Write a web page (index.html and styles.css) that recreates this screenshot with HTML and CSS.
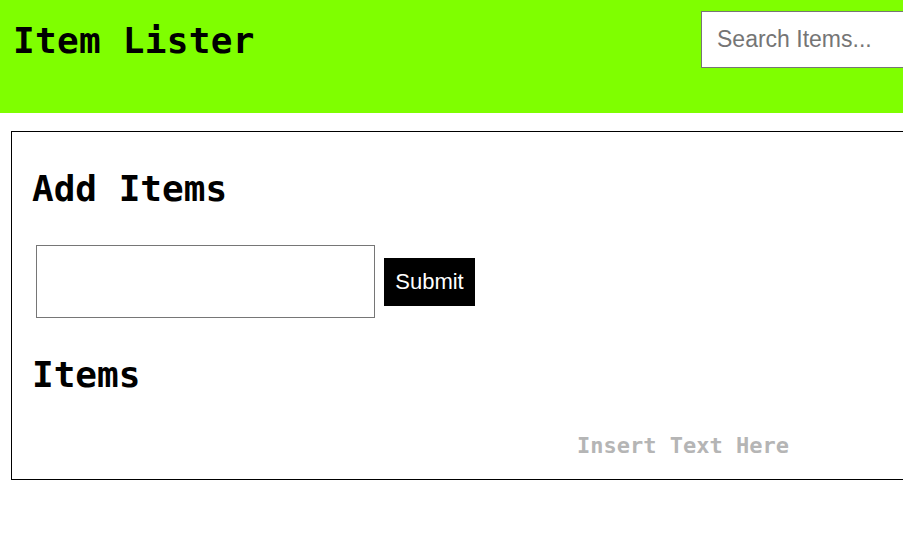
FILE: index.html
```html
<!DOCTYPE html>
<html>
<head>
<meta charset="utf-8">
<link rel="stylesheet" href="styles.css">
</head>
<body>
<div class="page">
<header class="header">
  <h1 class="title">Item Lister</h1>
  <input class="search" type="text" placeholder="Search Items...">
</header>
<main class="panel">
  <h2 class="heading">Add Items</h2>
  <form class="add-form">
    <input class="add-input" type="text">
    <button class="submit" type="button">Submit</button>
  </form>
  <h2 class="heading items-heading">Items</h2>
  <div class="placeholder-row"><span class="placeholder">Insert Text Here</span></div>
</main>
</div>
</body>
</html>
```

FILE: styles.css
```css
html, body {
  margin: 0;
  padding: 0;
  background: #fff;
  font-family: "DejaVu Sans Mono", monospace;
}
.page {
  width: 903px;
  height: 544px;
  overflow: hidden;
}
.header {
  background: #7fff00;
  height: 113px;
  display: flex;
  align-items: flex-start;
  justify-content: space-between;
  box-sizing: border-box;
  padding: 11px 0 0 13px;
}
.title {
  margin: 8px 0 0 0;
  font-size: 36px;
  line-height: 44px;
  font-weight: bold;
  color: #000;
  letter-spacing: 0.3px;
}
.search {
  width: 230px;
  height: 57px;
  margin-right: -28px;
  box-sizing: border-box;
  border: 1px solid #767676;
  padding: 0 15px;
  font-family: "Liberation Sans", Arial, sans-serif;
  font-size: 23px;
  flex-shrink: 0;
}
.search::placeholder { color: #757575; }
.panel {
  margin: 18px 0 0 11px;
  width: 960px;
  height: 349px;
  box-sizing: border-box;
  border: 1px solid #000;
  padding: 35px 0 0 20px;
}
.heading {
  margin: 0;
  font-size: 36px;
  line-height: 44px;
  font-weight: bold;
  color: #000;
}
.add-form {
  display: flex;
  align-items: center;
  gap: 9px;
  margin: 34px 0 0 4px;
}
.add-input {
  width: 339px;
  height: 73px;
  box-sizing: border-box;
  border: 1px solid #767676;
  margin: 0;
}
.submit {
  background: #000;
  color: #fff;
  border: none;
  height: 48px;
  width: 91px;
  font-family: "Liberation Sans", Arial, sans-serif;
  font-size: 22px;
  padding: 0;
}
.items-heading {
  margin-top: 35px;
}
.placeholder-row {
  margin-top: 36px;
  padding-left: 545px;
}
.placeholder {
  font-size: 22px;
  font-weight: bold;
  color: #b5b5b5;
}
```
